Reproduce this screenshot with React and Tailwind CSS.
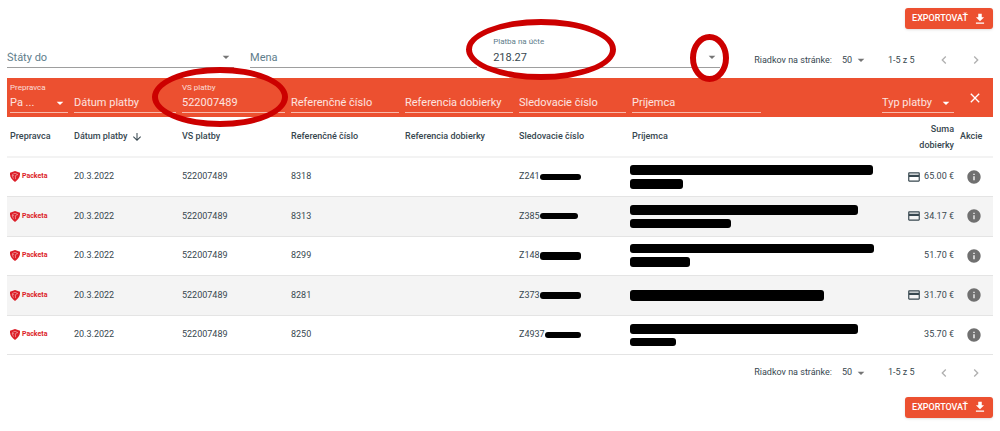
import React from "react";
import {
  MdArrowDownward,
  MdArrowDropDown,
  MdChevronLeft,
  MdChevronRight,
  MdClose,
  MdCreditCard,
  MdFileDownload,
  MdInfo,
} from "react-icons/md";

const rows = [
  {
    reference: "8318",
    tracking: "Z241",
    trackingBar: "w-[41px] h-[6px]",
    bars: ["w-[243px] h-[10px]", "w-[53px] h-[10px]"],
    amount: "65.00 €",
    card: true,
  },
  {
    reference: "8313",
    tracking: "Z385",
    trackingBar: "w-[38px] h-[6px]",
    bars: ["w-[228px] h-[10px]", "w-[101px] h-[9px]"],
    amount: "34.17 €",
    card: true,
  },
  {
    reference: "8299",
    tracking: "Z148",
    trackingBar: "w-[41px] h-[8px]",
    bars: ["w-[244px] h-[9px]", "w-[60px] h-[10px]"],
    amount: "51.70 €",
    card: false,
  },
  {
    reference: "8281",
    tracking: "Z373",
    trackingBar: "w-[41px] h-[7px]",
    bars: ["w-[194px] h-[11px]"],
    amount: "31.70 €",
    card: true,
  },
  {
    reference: "8250",
    tracking: "Z4937",
    trackingBar: "w-[36px] h-[6px]",
    bars: ["w-[228px] h-[10px]", "w-[46px] h-[8px]"],
    amount: "35.70 €",
    card: false,
  },
];

function Highlight({ className }) {
  return (
    <span
      aria-hidden="true"
      className={`pointer-events-none absolute z-10 rounded-[50%] border-[6px] border-[#cc0000] ${className}`}
    />
  );
}

function ExportButton() {
  return (
    <button
      type="button"
      className="flex h-[21px] items-center gap-[5px] rounded-[3px] bg-[#ec5030] pl-[7px] pr-[6px] text-[9px] font-medium text-white shadow-sm"
    >
      EXPORTOVAŤ
      <MdFileDownload className="size-[14px]" />
    </button>
  );
}

function Pagination({ id }) {
  return (
    <div className="flex h-6 items-center text-[9px] text-[#37474f]">
      <label htmlFor={id}>Riadkov na stránke:</label>
      <span className="relative ml-[10px] flex w-[46px] items-center">
        <select id={id} className="w-6 appearance-none bg-transparent" defaultValue="50">
          <option>50</option>
          <option>100</option>
        </select>
        <MdArrowDropDown className="pointer-events-none absolute left-[11px] size-4 text-[#757575]" />
      </span>
      <span className="w-12">1-5 z 5</span>
      <button type="button" aria-label="Predchádzajúca strana" className="mr-4 text-[#b0b0b0]">
        <MdChevronLeft className="size-4" />
      </button>
      <button type="button" aria-label="Ďalšia strana" className="mr-[9px] text-[#b0b0b0]">
        <MdChevronRight className="size-4" />
      </button>
    </div>
  );
}

function TopSelect({ label, arrow }) {
  return (
    <div className="relative flex h-[21px] items-center border-b border-[#9e9e9e]">
      <select aria-label={label} className="w-full appearance-none bg-transparent text-[11px] text-[#607d8b]">
        <option>{label}</option>
      </select>
      {arrow && <MdArrowDropDown className="pointer-events-none absolute right-0 size-4 text-[#757575]" />}
    </div>
  );
}

const filterBox = "relative flex h-[20px] items-center border-b border-white/60";
const filterControl =
  "w-full min-w-0 appearance-none bg-transparent text-[11px] text-white/85 outline-none placeholder:text-white/85";

function FilterInput({ label }) {
  return (
    <div className={filterBox}>
      <input aria-label={label} placeholder={label} className={filterControl} />
    </div>
  );
}

function PacketaLogo() {
  return (
    <span className="flex items-center gap-[2px] text-[7px] font-bold text-[#dc1e28]">
      <svg viewBox="0 0 20 22" className="h-[11px] w-[10px]" aria-hidden="true">
        <path d="M10 0 20 3.500Q21 15 10 22-1 15 0 3.500Z" fill="#dc1e28" />
        <path
          d="M4.500 7 10 4.500 15.500 7 11 9.200v7M8.500 10 4.500 8l1 5L8 15"
          fill="none"
          stroke="#fff"
          strokeOpacity="0.800"
          strokeWidth="1"
        />
      </svg>
      Packeta
    </span>
  );
}

export default function App() {
  return (
    <main className="bg-white px-[7px] pt-2 pb-3 font-[Roboto,sans-serif] leading-none text-[#37474f]">
      <div className="flex justify-end">
        <ExportButton />
      </div>

      <div className="mt-2 flex items-end">
        <div className="grid flex-1 grid-cols-3 items-end gap-4">
          <TopSelect label="Štáty do" arrow />
          <TopSelect label="Mena" />
          <div className="relative">
            <label htmlFor="payment" className="block text-[8px] leading-[10px] text-[#607d8b]">
              Platba na účte
            </label>
            <div className="flex h-[21px] items-center border-b border-[#9e9e9e]">
              <input
                id="payment"
                defaultValue="218.27"
                className="w-full min-w-0 bg-transparent text-[11px] text-[#37474f] outline-none"
              />
              <button type="button" aria-label="Zobraziť možnosti" className="text-[#757575]">
                <MdArrowDropDown className="size-4" />
              </button>
            </div>
            <Highlight className="-left-[27px] -top-[18px] h-[61px] w-[150px]" />
            <Highlight className="-right-[9px] -top-[3px] h-[48px] w-[39px]" />
          </div>
        </div>
        <div className="-mb-1 pl-[34px]">
          <Pagination id="rows-top" />
        </div>
      </div>

      <table className="mt-[10px] w-full table-fixed border-collapse text-left">
        <colgroup>
          <col className="w-[64px]" />
          <col className="w-[108px]" />
          <col className="w-[109px]" />
          <col className="w-[114px]" />
          <col className="w-[114px]" />
          <col className="w-[113px]" />
          <col />
          <col className="w-[78px]" />
          <col className="w-[36px]" />
        </colgroup>
        <thead>
          <tr className="h-[39px] bg-[#ec5030] align-bottom text-white/80">
            <td className="px-[3px] pb-1">
              <label htmlFor="carrier" className="block text-[8px] leading-[10px]">
                Prepravca
              </label>
              <div className={filterBox}>
                <select id="carrier" className={filterControl}>
                  <option>Pa ...</option>
                </select>
                <MdArrowDropDown className="pointer-events-none absolute right-0 size-4 text-white" />
              </div>
            </td>
            <td className="px-[3px] pb-1">
              <FilterInput label="Dátum platby" />
            </td>
            <td className="relative px-[3px] pb-1">
              <label htmlFor="vs" className="block text-[8px] leading-[10px]">
                VS platby
              </label>
              <div className={filterBox}>
                <input id="vs" defaultValue="522007489" className={filterControl} />
              </div>
              <Highlight className="-left-[27px] -top-[11px] h-[60px] w-[136px]" />
            </td>
            <td className="px-[3px] pb-1">
              <FilterInput label="Referenčné číslo" />
            </td>
            <td className="px-[3px] pb-1">
              <FilterInput label="Referencia dobierky" />
            </td>
            <td className="px-[3px] pb-1">
              <FilterInput label="Sledovacie číslo" />
            </td>
            <td className="px-[3px] pb-1">
              <div className="max-w-[129px]">
                <FilterInput label="Príjemca" />
              </div>
            </td>
            <td className="px-[3px] pb-1">
              <div className={filterBox}>
                <select aria-label="Typ platby" className={filterControl}>
                  <option>Typ platby</option>
                </select>
                <MdArrowDropDown className="pointer-events-none absolute right-0 size-4 text-white" />
              </div>
            </td>
            <td className="align-middle">
              <button type="button" aria-label="Zrušiť filtre" className="ml-[10px] block text-white">
                <MdClose className="size-4" />
              </button>
            </td>
          </tr>
          <tr className="h-10 border-b-2 border-[#f3f3f3] text-[9px] whitespace-nowrap *:px-[3px] *:font-medium">
            <th scope="col">Prepravca</th>
            <th scope="col">
              <button type="button" className="flex items-center gap-1">
                Dátum platby
                <MdArrowDownward className="size-3" />
              </button>
            </th>
            <th scope="col">VS platby</th>
            <th scope="col">Referenčné číslo</th>
            <th scope="col">Referencia dobierky</th>
            <th scope="col">Sledovacie číslo</th>
            <th scope="col">Príjemca</th>
            <th scope="col" className="text-right leading-4">
              Suma
              <br />
              dobierky
            </th>
            <th scope="col">Akcie</th>
          </tr>
        </thead>
        <tbody>
          {rows.map((row) => (
            <tr
              key={row.reference}
              className="h-[39px] border-b border-[#e4e4e4] text-[9px] even:h-10 even:bg-[#f4f4f4] *:px-[3px]"
            >
              <td>
                <PacketaLogo />
              </td>
              <td>20.3.2022</td>
              <td>522007489</td>
              <td>{row.reference}</td>
              <td />
              <td>
                <span className="flex items-center">
                  {row.tracking}
                  <span className={`rounded-[3px] bg-black ${row.trackingBar}`} />
                </span>
              </td>
              <td>
                <span className="-ml-[2px] flex flex-col gap-[4px]">
                  {row.bars.map((bar) => (
                    <span key={bar} className={`block rounded-[3px] bg-black ${bar}`} />
                  ))}
                </span>
              </td>
              <td>
                <span className="flex items-center justify-end gap-[3px] whitespace-nowrap">
                  {row.card && <MdCreditCard className="size-[14px]" />}
                  {row.amount}
                </span>
              </td>
              <td>
                <button type="button" aria-label="Detail" className="ml-[6px] block text-[#707070]">
                  <MdInfo className="size-4" />
                </button>
              </td>
            </tr>
          ))}
        </tbody>
      </table>

      <div className="mt-1.5 flex justify-end">
        <Pagination id="rows-bottom" />
      </div>
      <div className="mt-3 flex justify-end">
        <ExportButton />
      </div>
    </main>
  );
}
